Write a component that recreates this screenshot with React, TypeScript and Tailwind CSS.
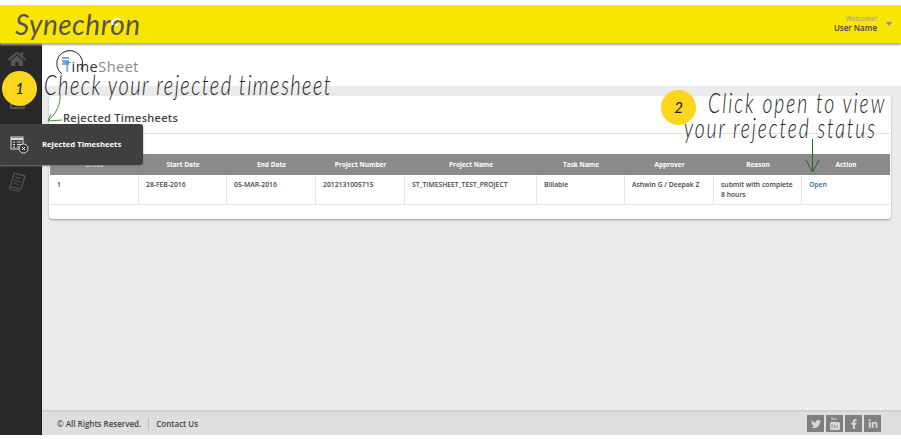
import { FaHome, FaTwitter, FaFacebookF, FaLinkedinIn } from 'react-icons/fa';

const hand = "font-['Lato',sans-serif] font-light italic text-[#222] origin-left [transform:scaleX(0.72)] whitespace-nowrap";

const columns = [
  { label: 'Sr.No', width: 'w-[89px]', value: '1' },
  { label: 'Start Date', width: 'w-[88px]', value: '28-FEB-2016' },
  { label: 'End Date', width: 'w-[89px]', value: '05-MAR-2016' },
  { label: 'Project Number', width: 'w-[89px]', value: '2012131005715' },
  { label: 'Project Name', width: 'w-[132px]', value: 'ST_TIMESHEET_TEST_PROJECT' },
  { label: 'Task Name', width: 'w-[88px]', value: 'Billable' },
  { label: 'Approver', width: 'w-[89px]', value: 'Ashwin G / Deepak Z' },
  { label: 'Reason', width: 'w-[88px]', value: 'submit with complete 8 hours' },
  { label: 'Action', width: 'flex-1', value: 'Open' },
];

function Sidebar() {
  return (
    <aside className="relative w-[42px] shrink-0 bg-[#282828] border-r border-[#1c1c1c] flex flex-col items-center pr-[7px]">
      <FaHome size={18} className="mt-[7px] text-[#555]" />
      <div className="mt-[30px] w-[15px] h-[11px] border-2 border-[#555] rounded-[1px]" />
      {/* report icon */}
      <svg width="20" height="20" viewBox="0 0 20 20" className="mt-[63px] text-[#555]" fill="none" stroke="currentColor" strokeWidth="1.2">
        <path d="M7 1l11 3-4 13-11-2c2-4 3-9 4-14z" />
        <path d="M8 5l6 2M7.500 8l6 2M6.500 11l6 2" strokeWidth="1" />
        <path d="M3 15c-1 2 0 3 2 3l8 1" />
      </svg>
    </aside>
  );
}

function Table() {
  return (
    <div className="mx-px">
      <div className="flex h-[21px] bg-[#8b8a8a]">
        {columns.map((c) => (
          <div key={c.label} className={`${c.width} flex items-center justify-center text-[6.5px] font-bold text-white`}>
            {c.label}
          </div>
        ))}
      </div>
      <div className="flex h-[30px] border-b border-[#e2e2e2]">
        {columns.map((c, i) => (
          <div
            key={c.label}
            className={`${c.width} ${i < 8 ? 'border-r border-[#e4e4e4]' : ''} pl-[7px] pr-1 pt-[5px] text-[6.8px] leading-[9.5px] font-semibold ${c.value === 'Open' ? 'text-[#2a6db0]' : 'text-[#444]'}`}
          >
            {c.value}
          </div>
        ))}
      </div>
    </div>
  );
}

export default function App() {
  return (
    <div className="relative w-[901px] h-[439px] overflow-hidden bg-white pt-[5px] pb-[4px] flex flex-col font-['Open_Sans',sans-serif]">
      <header className="h-[38px] shrink-0 bg-[#fae500] flex items-center justify-between pl-[15px] pr-[9px] shadow-[0_2px_2px_#a8a8a8] z-10 relative">
        <div className="relative text-[28px] leading-none font-['Lato',sans-serif] italic font-normal text-[#555] tracking-[0.5px]">
          Synechron
        </div>
        <div className="flex items-center gap-[9px]">
          <div className="text-right leading-none">
            <div className="text-[6.7px] text-[#a8a890] font-semibold mb-[1px]">Welcome!</div>
            <div className="text-[8px] font-semibold text-[#444]">User Name</div>
          </div>
          <div className="w-0 h-0 border-x-[3.5px] border-x-transparent border-t-[4px] border-t-[#8f8f80]" />
        </div>
      </header>

      <div className="flex-1 flex min-h-0">
        <Sidebar />
        <main className="flex-1 flex flex-col bg-[#ebebeb] min-w-0">
          <div className="h-[43px] shrink-0 bg-white pt-[15px] pl-[21px] text-[14.5px] leading-[18px] text-[#888] tracking-[0.5px]">
            <span className="text-[#4a90d0]">T</span>
            <span className="text-[#333]">ime</span>Sheet
          </div>
          <div className="flex-1 pl-[7px] pt-[10px] pr-[10px]">
            <section className="h-[123px] bg-white rounded-[3px] shadow-[0_1px_2px_#999]">
              <div className="h-[38px] mx-px border-b border-[#e2e2e2] pl-[13px] pt-[14px] text-[11px] leading-[16px] font-semibold tracking-[0.3px] text-[#444]">
                Rejected Timesheets
              </div>
              <div className="h-[20px]" />
              <Table />
            </section>
          </div>
          <footer className="h-[25px] shrink-0 bg-[#dedede] border-t-2 border-[#d2d2d2] flex items-center justify-between pl-[15px] pr-[20px] text-[8px] font-semibold text-[#444]">
            <div className="flex items-center">
              <span className="pr-[7px] border-r border-[#bbb] leading-[11px]">© All Rights Reserved.</span>
              <span className="pl-[7px]">Contact Us</span>
            </div>
            <div className="flex gap-[2px] text-[#d8d8d8]">
              <span className="w-[17px] h-[17px] bg-[#7f7f7f] flex items-center justify-center"><FaTwitter size={10} /></span>
              <span className="w-[17px] h-[17px] bg-[#7f7f7f] flex items-center justify-center">
                <svg width="10" height="13" viewBox="0 0 10 13" fill="none" stroke="currentColor">
                  <path d="M2 0v3M4 1v2M6 1v2" strokeWidth="1" />
                  <rect x="0" y="5" width="10" height="8" rx="1.500" fill="currentColor" stroke="none" />
                  <path d="M2 7v4M4.500 8v3M7 8v3" stroke="#7f7f7f" strokeWidth="0.8" />
                </svg>
              </span>
              <span className="w-[17px] h-[17px] bg-[#7f7f7f] flex items-center justify-center"><FaFacebookF size={10} /></span>
              <span className="w-[17px] h-[17px] bg-[#7f7f7f] flex items-center justify-center"><FaLinkedinIn size={10} /></span>
            </div>
          </footer>
        </main>
      </div>

      {/* logo "o" highlight */}
      <svg className="absolute left-[109px] top-[15px] z-20" width="16" height="16" viewBox="0 0 16 16" fill="none">
        <path d="M3.500 10a5 5 0 0 1 8-5" stroke="#fff" strokeWidth="2.2" />
        <circle cx="7.500" cy="10" r="1.300" fill="#fff" />
      </svg>

      {/* TimeSheet logo ring */}
      <svg className="absolute left-[55px] top-[49px]" width="30" height="30" viewBox="0 0 30 30" fill="none">
        <path d="M26 21A13 13 0 1 0 7 25" stroke="#222" strokeWidth="1" />
        <path d="M7 9h7M7 12h7M7 15h7" stroke="#4a90d0" strokeWidth="1.5" />
      </svg>

      {/* flyout */}
      <div className="absolute left-0 top-[124px] w-[143px] h-[41px] bg-[#3f3f3f] rounded-r-[3px] shadow-[0_1px_2px_#777] flex items-center z-20">
        <svg width="20" height="18" viewBox="0 0 20 18" className="ml-[10px]" fill="none">
          <rect x="1" y="1" width="12" height="12" stroke="#ddd" strokeWidth="1" />
          <path d="M1 3h12" stroke="#ddd" strokeWidth="2" />
          <path d="M3 6h2M7 6h4M3 8.500h2M7 8.500h4M3 11h2M7 11h2" stroke="#ddd" />
          <circle cx="13.500" cy="12.500" r="4.500" fill="#333" stroke="#ddd" />
          <path d="M12 11l3 3M15 11l-3 3" stroke="#fff" />
        </svg>
        <span className="ml-[12px] text-[7.7px] font-bold text-white whitespace-nowrap">Rejected Timesheets</span>
      </div>

      {/* annotation 1 */}
      <div className="absolute left-[2px] top-[71px] w-[35px] h-[35px] rounded-full bg-[#fdd51d] flex items-center justify-center z-30 text-[15px] italic font-medium font-['Lato',sans-serif] text-[#222]">
        1
      </div>
      <div className={`absolute left-[44px] top-[68px] z-30 text-[28px] leading-[32px] tracking-[2px] ${hand}`}>
        Check your rejected timesheet
      </div>
      <svg className="absolute left-[45px] top-[92px] z-30" width="20" height="32" viewBox="0 0 20 32" fill="none">
        <path d="M15 2c1 10-4 20-12 27M3 29l14-1M3 29l3-7" stroke="#4a8a3a" strokeWidth="1" />
      </svg>

      {/* annotation 2 */}
      <div className="absolute left-[661px] top-[90px] w-[35px] h-[35px] rounded-full bg-[#fdd51d] flex items-center justify-center z-30 text-[15px] italic font-medium font-['Lato',sans-serif] text-[#222]">
        2
      </div>
      <div className={`absolute left-[708px] top-[88px] z-30 text-[27px] leading-[30px] tracking-[2.700px] ${hand}`}>
        Click open to view
      </div>
      <div className={`absolute left-[684px] top-[113px] z-30 text-[27px] leading-[30px] tracking-[2.600px] ${hand}`}>
        your rejected status
      </div>
      <svg className="absolute left-[805px] top-[138px] z-30" width="16" height="36" viewBox="0 0 16 36" fill="none">
        <path d="M7.500 1v33M1 22l6.500 12L14 22" stroke="#1e6a1e" strokeWidth="1" />
      </svg>
    </div>
  );
}
